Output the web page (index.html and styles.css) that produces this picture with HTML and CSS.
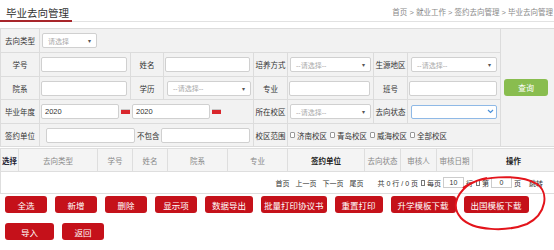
FILE: index.html
```html
<!DOCTYPE html>
<html lang="zh-CN">
<head>
  <meta charset="UTF-8">
  <meta name="viewport" content="width=device-width, initial-scale=1.0">
  <title>毕业去向管理</title>
  <link rel="stylesheet" href="styles.css">
</head>
<body>
  <div class="page">
    <!-- 标题栏 + 面包屑 -->
    <div class="page-head">
      <h1 class="page-title">毕业去向管理</h1>
      <div class="crumbs">首页 &gt; 就业工作 &gt; 签约去向管理 &gt; 毕业去向管理</div>
    </div>

    <!-- 查询条件 -->
    <table class="filter">
      <colgroup>
        <col style="width:39px"><col style="width:91px"><col style="width:33px"><col style="width:90px">
        <col style="width:34px"><col style="width:86px"><col style="width:34px"><col style="width:93px"><col style="width:54px">
      </colgroup>
      <tr>
        <td class="lbl">去向类型</td>
        <td colspan="7"><div class="sel sel-short"><span>请选择</span><i>▾</i></div></td>
        <td rowspan="5" class="side"><button class="btn-query">查询</button></td>
      </tr>
      <tr>
        <td class="lbl">学号</td>
        <td><input type="text"></td>
        <td class="lbl">姓名</td>
        <td><input type="text"></td>
        <td class="lbl">培养方式</td>
        <td><div class="sel sel-mid"><span>--请选择--</span><i>▾</i></div></td>
        <td class="lbl">生源地区</td>
        <td><div class="sel sel-wide"><span>--请选择--</span><i>▾</i></div></td>
      </tr>
      <tr class="short">
        <td class="lbl">院系</td>
        <td><input type="text"></td>
        <td class="lbl">学历</td>
        <td><div class="sel sel-edu"><span>--请选择--</span><i>▾</i></div></td>
        <td class="lbl">专业</td>
        <td><input type="text"></td>
        <td class="lbl">班号</td>
        <td><input type="text"></td>
      </tr>
      <tr>
        <td class="lbl">毕业年度</td>
        <td colspan="3">
          <div class="dates">
            <input type="text" class="date" value="2020"><span class="cal"></span>
            <input type="text" class="date" value="2020"><span class="cal"></span>
          </div>
        </td>
        <td class="lbl">所在校区</td>
        <td><div class="sel sel-mid"><span>--请选择--</span><i>▾</i></div></td>
        <td class="lbl">去向状态</td>
        <td>
          <div class="sel sel-wide sel-focus">
            <span></span>
            <b><svg width="7" height="5" viewBox="0 0 7 5"><path d="M1 1l2.5 2.5L6 1" fill="none" stroke="#4a90d9" stroke-width="1.2"/></svg></b>
          </div>
        </td>
      </tr>
      <tr class="short">
        <td class="lbl">签约单位</td>
        <td colspan="3">
          <div class="unit">
            <input type="text" class="unit-in">
            <span class="unit-txt">不包含</span>
            <input type="text" class="unit-in">
          </div>
        </td>
        <td class="lbl">校区范围</td>
        <td colspan="3">
          <div class="campus">
            <label><span class="cb"></span>济南校区</label>
            <label><span class="cb"></span>青岛校区</label>
            <label><span class="cb"></span>威海校区</label>
            <label><span class="cb"></span>全部校区</label>
          </div>
        </td>
      </tr>
    </table>

    <!-- 列表 -->
    <table class="grid">
      <colgroup>
        <col style="width:18px"><col style="width:79px"><col style="width:35px"><col style="width:35px">
        <col style="width:60px"><col style="width:60px"><col style="width:77px"><col style="width:36px">
        <col style="width:36px"><col style="width:36px"><col style="width:82px">
      </colgroup>
      <tr>
        <th class="strong left">选择</th>
        <th>去向类型</th>
        <th>学号</th>
        <th>姓名</th>
        <th>院系</th>
        <th>专业</th>
        <th class="strong">签约单位</th>
        <th>去向状态</th>
        <th>审核人</th>
        <th>审核日期</th>
        <th class="strong">操作</th>
      </tr>
      <tr>
        <td colspan="11">
          <div class="pager">
            <span class="nav">首页</span>
            <span class="nav">上一页</span>
            <span class="nav">下一页</span>
            <span class="nav">尾页</span>
            <span class="total">共 0 行 / 0 页</span>
            <span class="tofu"></span><span>每页</span>
            <span class="pg-in">10</span>
            <span>行</span><span class="tofu"></span><span>第</span>
            <span class="pg-in">0</span>
            <span>页</span>
            <span class="jump">跳转</span>
          </div>
        </td>
      </tr>
    </table>

    <!-- 操作按钮 -->
    <div class="actions">
      <button class="btn">全选</button>
      <button class="btn">新增</button>
      <button class="btn">删除</button>
      <button class="btn">显示项</button>
      <button class="btn">数据导出</button>
      <button class="btn btn-tight">批量打印协议书</button>
      <button class="btn">重置打印</button>
      <button class="btn">升学模板下载</button>
      <button class="btn">出国模板下载</button>
    </div>
    <div class="actions">
      <button class="btn btn-wide">导入</button>
      <button class="btn">返回</button>
    </div>

    <!-- 红圈标注 -->
    <svg class="mark" width="96" height="60" viewBox="0 0 96 60">
      <path d="M10 14 C24 2 66 -1 84 10 C96 18 94 40 74 50 C54 58 20 57 8 44 C-1 34 2 22 14 12 C20 8 28 5 34 4" fill="none" stroke="#e3141b" stroke-width="2"/>
    </svg>
  </div>
</body>
</html>
```

FILE: styles.css
```css
* {
  box-sizing: border-box;
}
body {
  margin: 0;
  font-family: "Liberation Sans", "Noto Sans CJK SC", sans-serif;
  font-size: 7.5px;
  color: #333;
  background: #fff;
}
.page {
  position: relative;
  width: 554px;
}

/* 标题栏 */
.page-head {
  display: flex;
  justify-content: space-between;
  align-items: flex-end;
  height: 22px;
  border-bottom: 1px solid #e2e2e2;
}
.page-title {
  margin: 0 0 -1px;
  padding: 0 4px 1px 6px;
  width: 72px;
  font-size: 10.5px;
  font-weight: normal;
  line-height: 12px;
  color: #333;
  white-space: nowrap;
  border-bottom: 2px solid #a8262b;
}
.crumbs {
  padding: 0 1px 4px 0;
  line-height: 9px;
  color: #888;
  white-space: nowrap;
}

/* 查询条件 */
.filter {
  width: 554px;
  margin-top: 6px;
  border-collapse: collapse;
  table-layout: fixed;
  background: #f2f2f2;
}
.filter td {
  height: 24px;
  padding: 0 3px 0 1px;
  border: 1px solid #dcdcdc;
  vertical-align: middle;
}
.filter tr.short td {
  height: 23px;
}
.filter td.lbl {
  padding: 0;
  text-align: center;
  white-space: nowrap;
  color: #333;
}
.filter td.side {
  padding-left: 3px;
}
.filter input {
  display: block;
  width: 100%;
  height: 15px;
  padding: 0 3px;
  border: 1px solid #d0d0d0;
  border-radius: 2px;
  background: #fff;
  font: inherit;
  color: #333;
}
.sel {
  display: flex;
  justify-content: space-between;
  align-items: center;
  width: 80px;
  height: 15px;
  margin-left: 1px;
  padding: 0 5px;
  border: 1px solid #d0d0d0;
  border-radius: 2px;
  background: #fff;
  color: #aaa;
  font-size: 7px;
}
.sel i {
  font-style: normal;
  font-size: 6px;
  color: #555;
}
.sel-short {
  width: 55px;
}
.sel-mid {
  width: 81px;
  margin-left: 1px;
}
.sel-edu {
  width: 84px;
  margin-left: 2px;
}
.sel-wide {
  width: 86px;
  margin-left: 2px;
}
.sel-focus {
  height: 14px;
  padding: 0 0 0 5px;
  border-color: #8fb9e6;
}
.sel-focus b {
  display: flex;
  align-items: center;
  justify-content: center;
  width: 12px;
  height: 100%;
}

.dates {
  display: flex;
  align-items: center;
}
.filter input.date {
  width: 78px;
}
.cal {
  display: inline-block;
  width: 9px;
  height: 5px;
  margin: 0 2px;
  border-top: 1px solid #c8c8c8;
  background: #d9262c;
}
.unit {
  display: flex;
  align-items: center;
  padding-left: 5px;
}
.filter input.unit-in {
  width: 89px;
}
.unit-txt {
  margin: 0 1px 0 2px;
  white-space: nowrap;
}
.campus {
  display: flex;
  gap: 3px;
  padding-left: 1px;
}
.campus label {
  display: flex;
  align-items: center;
  width: 37px;
  white-space: nowrap;
}
.cb {
  display: inline-block;
  width: 5px;
  height: 6px;
  margin-right: 2px;
  border: 1px solid #999;
  border-radius: 1px;
  background: #fff;
}
.btn-query {
  width: 44px;
  height: 17px;
  border: none;
  border-radius: 3px;
  background: #89bd4f;
  color: #fff;
  font: inherit;
  font-size: 8px;
}

/* 列表 */
.grid {
  width: 554px;
  margin-top: 1px;
  border-collapse: collapse;
  table-layout: fixed;
}
.grid th {
  height: 23px;
  padding: 0;
  border: 1px solid #dedede;
  background: #f4f4f4;
  font-weight: normal;
  color: #888;
  white-space: nowrap;
}
.grid th.strong {
  font-weight: bold;
  color: #222;
}
.grid th.left {
  text-align: left;
  padding-left: 1px;
  color: #223;
}
.grid td {
  height: 22px;
  padding: 0;
  border: 1px solid #dedede;
  background: #fff;
}
.pager {
  display: flex;
  justify-content: flex-end;
  align-items: center;
  gap: 2px;
  padding-right: 11px;
  font-size: 7px;
  color: #333;
  white-space: nowrap;
}
.pager .nav {
  margin-right: 4px;
}
.pager .total {
  margin-left: 8px;
}
.pager .tofu {
  display: inline-block;
  width: 4px;
  height: 6px;
  margin-left: 1px;
  border: 1px solid #777;
}
.pg-in {
  display: inline-block;
  width: 21px;
  height: 11px;
  line-height: 9px;
  border: 1px solid #ccc;
  text-align: center;
  background: #fff;
}
.pager .jump {
  margin-left: 6px;
}

/* 操作按钮 */
.actions {
  display: flex;
  gap: 8px;
  padding: 2px 5px 5px;
}
.actions + .actions {
  padding-top: 5px;
}
.btn {
  min-width: 42px;
  height: 17px;
  padding: 0 7px;
  border: none;
  border-radius: 3px;
  background: #c5111a;
  color: #fff;
  font: inherit;
  font-size: 8.5px;
  white-space: nowrap;
}
.btn-tight {
  padding: 0 3px;
}
.btn-wide {
  min-width: 49px;
}

/* 标注 */
.mark {
  position: absolute;
  left: 453px;
  top: 174px;
}
```
